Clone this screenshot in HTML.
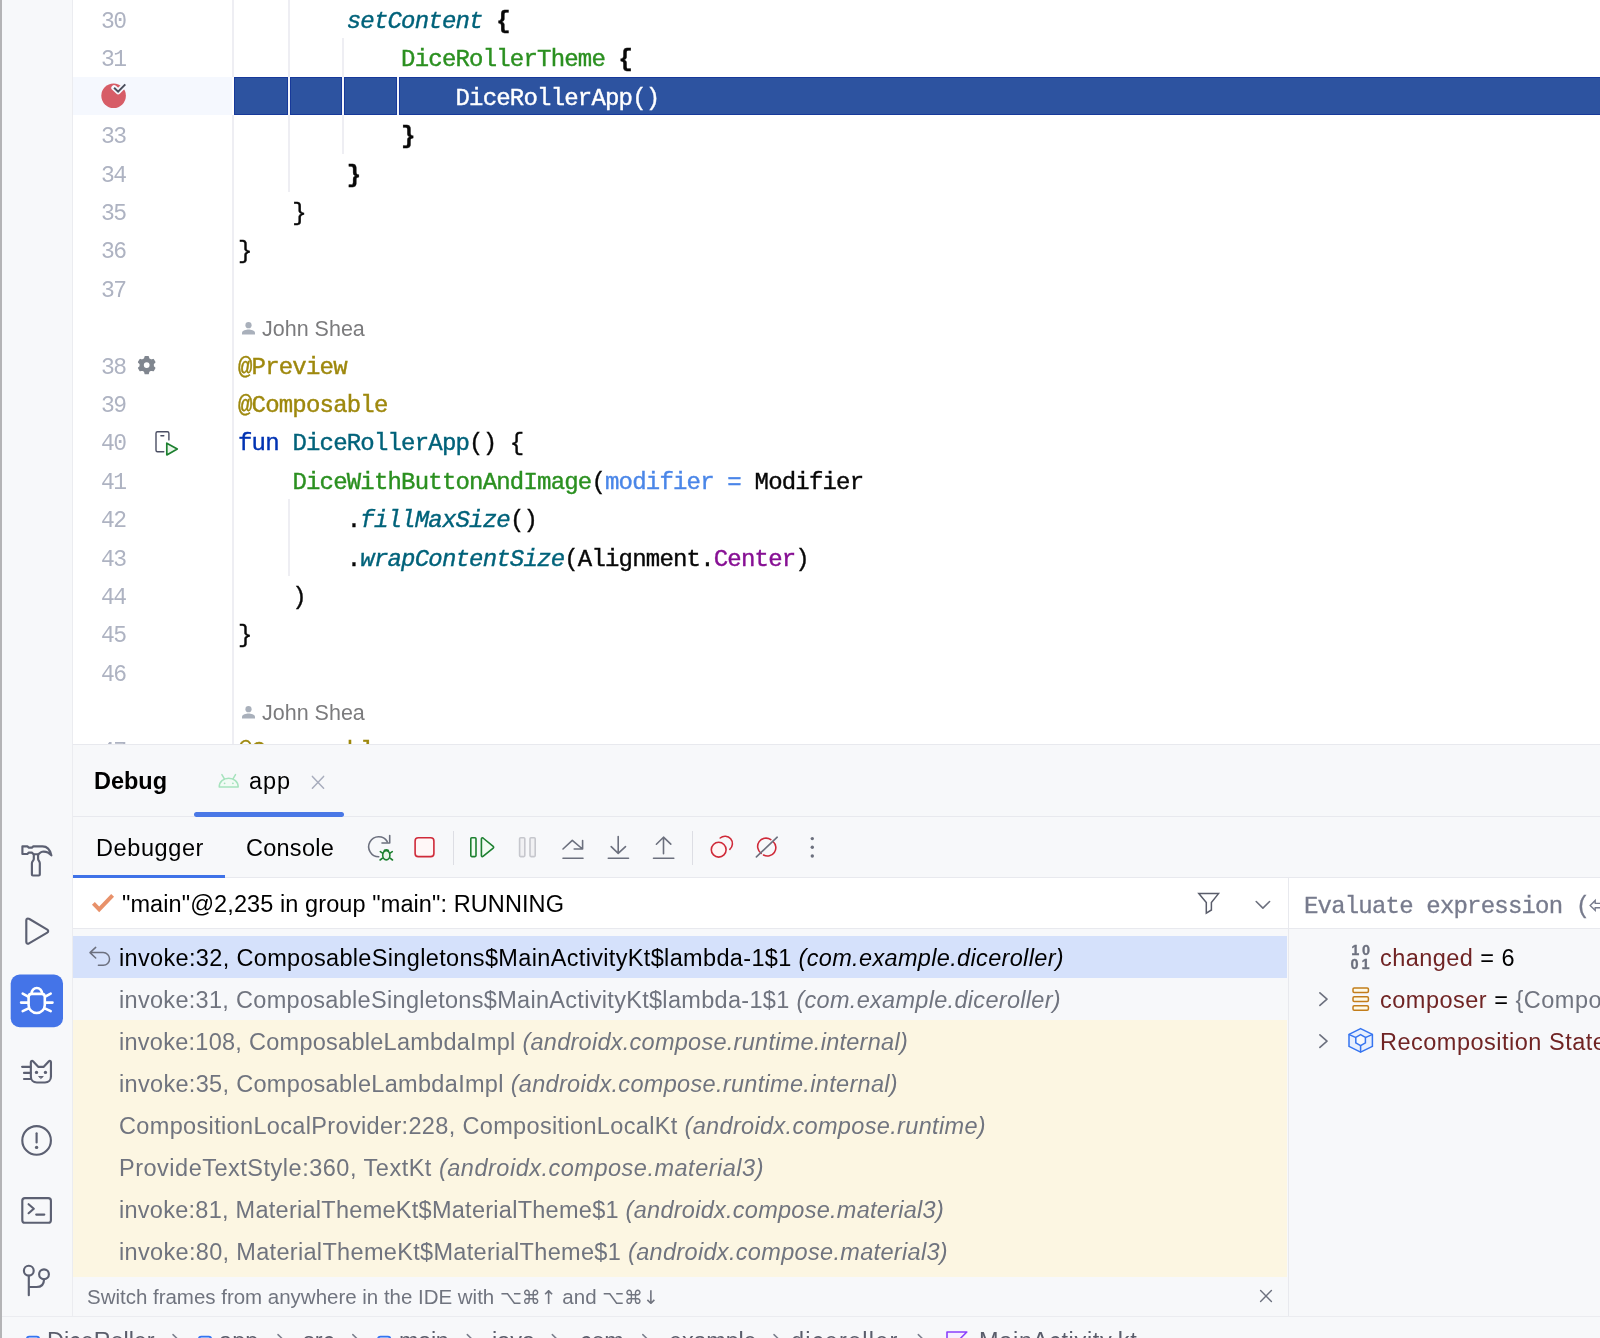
<!DOCTYPE html>
<html lang="en">
<head>
<meta charset="utf-8">
<title>Debug - MainActivity.kt</title>
<style>
*{box-sizing:border-box;margin:0;padding:0}
html,body{width:1600px;height:1338px;overflow:hidden;background:#f7f8fa}
body{position:relative;font-family:"Liberation Sans",sans-serif;color:#000}
.abs{position:absolute}
#edge{left:0;top:0;width:2px;height:1338px;background:#b4b4b6}
#strip{left:2px;top:0;width:71px;height:1316px;background:#f7f8fa;border-right:1px solid #ebecf0}
#editor{left:73px;top:0;width:1527px;height:744px;background:#fff;overflow:hidden}
#gutline{left:159px;top:0;width:2px;height:744px;background:#eeeef3}
.ln{position:absolute;left:0;width:52.5px;text-align:right;font-family:"Liberation Mono",monospace;font-size:23px;letter-spacing:-1.6px;line-height:38.4px;height:38.4px;color:#aeb3c2;white-space:pre}
.cl{position:absolute;left:165px;font-family:"Liberation Mono",monospace;font-size:24px;letter-spacing:-0.81px;-webkit-text-stroke:0.4px currentColor;line-height:38.4px;height:38.4px;white-space:pre;color:#080808}
.guide{position:absolute;width:2px;background:#eeeef3}
.fn{color:#00627a}.it{font-style:italic}
.cmp{color:#2b9020}
.ann{color:#9e880d}
.kw{color:#0033b3}
.np{color:#4a86e8}
.fld{color:#871094}
.b{font-weight:bold}
.auth{position:absolute;left:189px;font-size:21.5px;line-height:38.4px;color:#7b7b7d;white-space:pre}
#panel{left:73px;top:744px;width:1527px;height:572px;background:#f7f8fa}
.hline{position:absolute;height:1px;background:#e8e9ee}
.vline{position:absolute;width:1px;background:#e8e9ee}
.ui{position:absolute;white-space:pre;font-size:23.5px;line-height:42px;height:42px}
.sym{font-family:"DejaVu Sans",sans-serif;font-size:19px}
.fr{position:absolute;left:0;width:1214px;height:42px}
.fr span.t{position:absolute;left:46px;top:0;line-height:42px;font-size:24px;white-space:pre;color:#6c707e}
.lib{background:#fdf6e1}
.var{color:#702424}
svg{position:absolute;overflow:visible}
.ui,.cl,.ln,.auth,svg{will-change:transform}
#status{left:2px;top:1316px;width:1598px;height:22px;background:#f7f8fa;border-top:1px solid #ebecf0;overflow:hidden}
</style>
</head>
<body>
<div id="edge" class="abs"></div>
<div id="strip" class="abs"></div>

<!-- EDITOR -->
<div id="editor" class="abs">
<!--EDITOR-CONTENT-->
<div class="abs" style="left:0;top:77px;width:160px;height:38px;background:#f5f8fe"></div>
<div class="abs" style="left:161px;top:77px;width:1366px;height:38px;background:#2d53a0;border-top:1px solid #17399a;border-bottom:1px solid #17399a;border-left:1px solid #17399a"></div>
<div id="gutline" class="abs"></div>
<div class="abs" style="left:159px;top:77px;width:2px;height:38px;background:#fff"></div>
<div class="guide" style="left:215px;top:0.0px;height:192.0px;width:2px"></div>
<div class="guide" style="left:269.3px;top:38.4px;height:115.2px;width:2px"></div>
<div class="guide" style="left:323.6px;top:76.8px;height:38.4px;width:2px"></div>
<div class="guide" style="left:215px;top:499.2px;height:76.8px;width:2px"></div>
<div class="guide" style="left:215px;top:77px;height:38px;width:2px;background:#f4f5fa;box-shadow:-1px 0 #17399a,1px 0 #17399a"></div>
<div class="guide" style="left:269.3px;top:77px;height:38px;width:2px;background:#f4f5fa;box-shadow:-1px 0 #17399a,1px 0 #17399a"></div>
<div class="guide" style="left:323.6px;top:77px;height:38px;width:2px;background:#f4f5fa;box-shadow:-1px 0 #17399a,1px 0 #17399a"></div>
<div class="ln" style="top:2.9px">30</div>
<div class="cl" style="top:2.9px">        <span class="fn it">setContent</span> <span class="b">{</span></div>
<div class="ln" style="top:41.3px">31</div>
<div class="cl" style="top:41.3px">            <span class="cmp">DiceRollerTheme</span> <span class="b">{</span></div>
<div class="cl" style="top:79.7px">                <span style="color:#fff">DiceRollerApp()</span></div>
<div class="ln" style="top:118.1px">33</div>
<div class="cl" style="top:118.1px">            <span class="b">}</span></div>
<div class="ln" style="top:156.5px">34</div>
<div class="cl" style="top:156.5px">        <span class="b">}</span></div>
<div class="ln" style="top:194.9px">35</div>
<div class="cl" style="top:194.9px">    }</div>
<div class="ln" style="top:233.3px">36</div>
<div class="cl" style="top:233.3px">}</div>
<div class="ln" style="top:271.7px">37</div>
<svg style="left:168px;top:320.7px" width="15" height="15" viewBox="0 0 15 15"><circle cx="7.5" cy="4.2" r="3.1" fill="#a9b0bb"/><path d="M1 13.5v-1.6c0-2.2 4.3-3.3 6.5-3.3s6.5 1.1 6.5 3.3v1.6z" fill="#a9b0bb"/></svg>
<div class="auth" style="top:310.1px">John Shea</div>
<div class="ln" style="top:348.5px">38</div>
<div class="cl" style="top:348.5px"><span class="ann">@Preview</span></div>
<div class="ln" style="top:386.9px">39</div>
<div class="cl" style="top:386.9px"><span class="ann">@Composable</span></div>
<div class="ln" style="top:425.3px">40</div>
<div class="cl" style="top:425.3px"><span class="kw">fun</span> <span class="fn">DiceRollerApp</span>() {</div>
<div class="ln" style="top:463.7px">41</div>
<div class="cl" style="top:463.7px">    <span class="cmp">DiceWithButtonAndImage</span>(<span class="np">modifier =</span> Modifier</div>
<div class="ln" style="top:502.1px">42</div>
<div class="cl" style="top:502.1px">        .<span class="fn it">fillMaxSize</span>()</div>
<div class="ln" style="top:540.5px">43</div>
<div class="cl" style="top:540.5px">        .<span class="fn it">wrapContentSize</span>(Alignment.<span class="fld">Center</span>)</div>
<div class="ln" style="top:578.9px">44</div>
<div class="cl" style="top:578.9px">    )</div>
<div class="ln" style="top:617.3px">45</div>
<div class="cl" style="top:617.3px">}</div>
<div class="ln" style="top:655.7px">46</div>
<svg style="left:168px;top:704.7px" width="15" height="15" viewBox="0 0 15 15"><circle cx="7.5" cy="4.2" r="3.1" fill="#a9b0bb"/><path d="M1 13.5v-1.6c0-2.2 4.3-3.3 6.5-3.3s6.5 1.1 6.5 3.3v1.6z" fill="#a9b0bb"/></svg>
<div class="auth" style="top:694.1px">John Shea</div>
<div class="ln" style="top:732.5px">47</div>
<div class="cl" style="top:732.5px"><span class="ann">@Composable</span></div>
<!--/EDITOR-CONTENT-->
</div>

<!-- DEBUG PANEL -->
<div id="panel" class="abs">
<!--PANEL-CONTENT-->
<div class="hline" style="left:0px;top:0px;width:1527px"></div>
<div id="t_debug" class="ui" style="left:21px;top:16.3px;font-size:23.5px;letter-spacing:-0.022px;font-weight:bold;color:#000">Debug</div>
<div id="t_app" class="ui" style="left:176px;top:16.3px;font-size:23.5px;letter-spacing:0.927px;">app</div>
<div class="abs" style="left:121px;top:68px;width:150px;height:5px;background:#4a78e6;border-radius:3px"></div>
<div class="hline" style="left:0px;top:72px;width:121px"></div>
<div class="hline" style="left:271px;top:72px;width:1256px"></div>
<div id="t_debugger" class="ui" style="left:23px;top:83.3px;font-size:23.5px;letter-spacing:0.598px;">Debugger</div>
<div id="t_console" class="ui" style="left:173px;top:83.3px;font-size:23.5px;letter-spacing:0.254px;">Console</div>
<div class="hline" style="left:0px;top:133px;width:1527px"></div>
<div class="abs" style="left:0px;top:131px;width:152px;height:3px;background:#3f72e8"></div>
<div class="vline" style="left:380px;top:87px;height:34px;background:#dddee4"></div>
<div class="vline" style="left:619px;top:87px;height:34px;background:#dddee4"></div>
<div class="abs" style="left:0px;top:134px;width:1527px;height:50px;background:#fff"></div>
<div class="hline" style="left:0px;top:184px;width:1527px"></div>
<div class="vline" style="left:1215px;top:134px;height:438px;"></div>
<div id="t_thread" class="ui" style="left:49px;top:138.8px;font-size:23.5px;letter-spacing:0.092px;">&quot;main&quot;@2,235 in group &quot;main&quot;: RUNNING</div>
<div class="abs" style="left:0px;top:192px;width:1214px;height:42px;background:#d5e1fb"></div>
<div id="t_f0" class="ui" style="left:46px;top:192.8px;font-size:23.5px;letter-spacing:0.342px;color:#000">invoke:32, ComposableSingletons$MainActivityKt$lambda-1$1 <i>(com.example.diceroller)</i></div>
<div id="t_f1" class="ui" style="left:46px;top:234.8px;font-size:23.5px;letter-spacing:0.305px;color:#70747f">invoke:31, ComposableSingletons$MainActivityKt$lambda-1$1 <i>(com.example.diceroller)</i></div>
<div class="abs" style="left:0px;top:276px;width:1214px;height:42px;background:#fcf6e2"></div>
<div id="t_f2" class="ui" style="left:46px;top:276.8px;font-size:23.5px;letter-spacing:0.269px;color:#70747f">invoke:108, ComposableLambdaImpl <i>(androidx.compose.runtime.internal)</i></div>
<div class="abs" style="left:0px;top:318px;width:1214px;height:42px;background:#fcf6e2"></div>
<div id="t_f3" class="ui" style="left:46px;top:318.8px;font-size:23.5px;letter-spacing:0.319px;color:#70747f">invoke:35, ComposableLambdaImpl <i>(androidx.compose.runtime.internal)</i></div>
<div class="abs" style="left:0px;top:360px;width:1214px;height:42px;background:#fcf6e2"></div>
<div id="t_f4" class="ui" style="left:46px;top:360.8px;font-size:23.5px;letter-spacing:0.344px;color:#70747f">CompositionLocalProvider:228, CompositionLocalKt <i>(androidx.compose.runtime)</i></div>
<div class="abs" style="left:0px;top:402px;width:1214px;height:42px;background:#fcf6e2"></div>
<div id="t_f5" class="ui" style="left:46px;top:402.8px;font-size:23.5px;letter-spacing:0.507px;color:#70747f">ProvideTextStyle:360, TextKt <i>(androidx.compose.material3)</i></div>
<div class="abs" style="left:0px;top:444px;width:1214px;height:42px;background:#fcf6e2"></div>
<div id="t_f6" class="ui" style="left:46px;top:444.8px;font-size:23.5px;letter-spacing:0.269px;color:#70747f">invoke:81, MaterialThemeKt$MaterialTheme$1 <i>(androidx.compose.material3)</i></div>
<div class="abs" style="left:0px;top:486px;width:1214px;height:46.5px;background:#fcf6e2"></div>
<div id="t_f7" class="ui" style="left:46px;top:486.8px;font-size:23.5px;letter-spacing:0.325px;color:#70747f">invoke:80, MaterialThemeKt$MaterialTheme$1 <i>(androidx.compose.material3)</i></div>
<div id="t_hint" class="ui" style="left:14px;top:531.8px;font-size:20.5px;letter-spacing:-0.015px;color:#70747f">Switch frames from anywhere in the IDE with <span class="sym">⌥⌘↑</span> and <span class="sym">⌥⌘↓</span></div>
<div class="ui" style="left:1231px;top:138.8px;font-family:'Liberation Mono',monospace;font-size:24px;letter-spacing:-0.81px;color:#777b8d;-webkit-text-stroke:0.3px currentColor">Evaluate expression (<span style="font-family:'DejaVu Sans',sans-serif;font-size:27px;letter-spacing:0;-webkit-text-stroke:0;position:relative;top:1px;margin-left:-1px">⏎</span>)</div>
<div id="t_v0" class="ui" style="left:1307px;top:192.8px;font-size:23.5px;letter-spacing:0.452px;"><span class="var">changed</span> = 6</div>
<div id="t_v1" class="ui" style="left:1307px;top:234.8px;font-size:23.5px;letter-spacing:0px;letter-spacing:0.5px"><span class="var">composer</span> = <span style="color:#70747f">{ComposerImpl@21543}</span></div>
<div id="t_v2" class="ui" style="left:1307px;top:276.8px;font-size:23.5px;letter-spacing:0px;letter-spacing:0.5px"><span class="var">Recomposition State</span></div>
<!--/PANEL-CONTENT-->
</div>

<!-- LEFT STRIP ICONS -->
<!--STRIP-ICONS-->
<svg class="abs" style="left:0;top:0;pointer-events:none" width="1600" height="1338" viewBox="0 0 1600 1338" fill="none" stroke-linecap="round" stroke-linejoin="round">
<circle cx="113.6" cy="95.8" r="12.3" fill="#d75d67"/>
<path d="M114.1 87.8 L118.1 91.6 L125.3 84.4" stroke="#f5f8fe" stroke-width="5.5"/>
<path d="M114.1 87.8 L118.1 91.6 L125.3 84.4" stroke="#4a4e5c" stroke-width="2" stroke-linecap="butt" stroke-linejoin="miter"/>
<path d="M144.66 358.82 L145.18 356.64 L148.22 356.64 L148.74 358.82 L151.12 360.20 L153.27 359.55 L154.79 362.19 L153.16 363.73 L153.16 366.47 L154.79 368.01 L153.27 370.65 L151.12 370.00 L148.74 371.38 L148.22 373.56 L145.18 373.56 L144.66 371.38 L142.28 370.00 L140.13 370.65 L138.61 368.01 L140.24 366.47 L140.24 363.73 L138.61 362.19 L140.13 359.55 L142.28 360.20Z M150.30 365.10 A3.6 3.6 0 1 0 143.10 365.10 A3.6 3.6 0 1 0 150.30 365.10Z" fill="#80868f" fill-rule="evenodd" stroke="#80868f" stroke-width="1.4"/>
<path d="M168.9 439.9 V433.3 Q168.9 431.8 167.4 431.8 H157.5 Q156 431.8 156 433.3 V450.3 Q156 451.8 157.5 451.8 H163.8" stroke="#4a4e63" stroke-width="1.4"/>
<path d="M160.9 435.7 H163.8" stroke="#4a4e63" stroke-width="1.4"/>
<path d="M166.8 443.2 L177.3 448.9 L166.8 454.9 Z" stroke="#1d8030" stroke-width="1.7" fill="#eaf5ea"/>
<path d="M22.4 846.4 H27.4 L28.8 847.6 H31.9 L33.3 846.4 H42.5 C47 846.4 50.2 850.2 51.4 855.4 C49 852.6 45.6 851.2 42.2 851.7 C40.6 852 39.6 853.2 38.6 854.2 H33.6 L31.9 852.6 H28.8 L27.4 854 H22.4 Z" stroke="#5c6072" stroke-width="2.15"/>
<path d="M33.8 854.6 V859 C33.8 860.6 31.9 861.4 31.9 863.2 V874.5 Q31.9 875.5 32.9 875.5 H38.8 Q39.8 875.5 39.8 874.5 V863.2 C39.8 861.4 38.1 860.6 38.1 859 V854.6" stroke="#5c6072" stroke-width="2.15"/>
<path d="M26.3 920.3 C26.3 918.8 27.8 918 29 918.8 L47.3 929.6 C48.5 930.3 48.5 931.9 47.3 932.6 L29 943.4 C27.8 944.2 26.3 943.4 26.3 941.9 Z" stroke="#5c6072" stroke-width="2.15"/>
<rect x="10.7" y="974.6" width="52.3" height="52.6" rx="9" fill="#4474e8"/>
<path d="M28.6 997 Q28.6 993.9 31.7 993.9 H41.7 Q44.8 993.9 44.8 997 V1004.9 A8.1 8.1 0 0 1 28.6 1004.9 Z" stroke="#fff" stroke-width="2.6"/>
<path d="M31.5 993.6 A5.3 5.6 0 0 1 42.1 993.6" stroke="#fff" stroke-width="2.6"/>
<path d="M28.2 996.7 L22.7 993.7 M28.2 1002.6 H21.1 M28.6 1008.3 L22.7 1011.2 M45.2 996.7 L50.7 993.7 M45.2 1002.6 H52.5 M44.8 1008.3 L50.7 1011.2" stroke="#fff" stroke-width="2.6"/>
<path d="M30.85 1062.2 C30.85 1061 32.2 1060.5 33 1061.3 L38.2 1066.85 H43.75 L48.9 1061.3 C49.7 1060.5 50.95 1061 50.95 1062.2 V1076.5 C50.95 1080 48.5 1082.5 45 1082.5 H36.8 C33.3 1082.5 30.85 1080 30.85 1076.5 Z" stroke="#5c6072" stroke-width="2.15"/>
<path d="M22.1 1066.8 H30.6 M24 1072.9 H30.6 M24 1079 H30.6" stroke="#5c6072" stroke-width="2.15"/>
<circle cx="36.5" cy="1072.4" r="1.65" fill="#5c6072"/><circle cx="45.45" cy="1072.4" r="1.65" fill="#5c6072"/><path d="M39 1076.5 H43.3 L41.15 1078.3 Z" fill="#5c6072" stroke="#5c6072" stroke-width="0.9"/>
<circle cx="36.6" cy="1140.4" r="14.3" stroke="#5c6072" stroke-width="2.15"/>
<path d="M36.6 1133.2 V1142.4" stroke="#5c6072" stroke-width="2.15"/><circle cx="36.6" cy="1147.4" r="1.7" fill="#5f6371"/>
<rect x="22.3" y="1198.1" width="28.6" height="24.7" rx="2.6" stroke="#5c6072" stroke-width="2.15"/>
<path d="M28.6 1204.2 L33.8 1208.7 L28.6 1213.2 M36.2 1214.6 H44.3" stroke="#5c6072" stroke-width="2.15"/>
<circle cx="28.8" cy="1270.7" r="4.9" stroke="#5c6072" stroke-width="2.15"/><circle cx="44" cy="1274.3" r="4.9" stroke="#5c6072" stroke-width="2.15"/>
<path d="M28.8 1275.8 V1295.2 M44 1279.4 C44 1284.5 41 1287 36.5 1287 H29.2" stroke="#5c6072" stroke-width="2.15"/>
<path d="M219.2 787 C219.2 781.7 223.4 778.3 228.7 778.3 C234 778.3 238.2 781.7 238.2 787 Z" stroke="#a6e3bd" stroke-width="1.5" fill="#f2fbf5"/>
<path d="M221.9 774.6 L224.4 778.9 M235.5 774.6 L233 778.9" stroke="#a6e3bd" stroke-width="1.5"/>
<circle cx="224.6" cy="783.3" r="0.9" fill="#a6e3bd"/><circle cx="232.9" cy="783.3" r="0.9" fill="#a6e3bd"/>
<path d="M312.4 776.4 L323.6 788.2 M323.6 776.4 L312.4 788.2" stroke="#a8adbd" stroke-width="1.5"/>
<path d="M378.75 856.8 A10 10 0 1 1 387.2 841.5 M389.7 835.6 V843 H382" stroke="#6c707e" stroke-width="1.6"/>
<ellipse cx="386.3" cy="855.3" rx="3.6" ry="4.6" stroke="#1d8030" stroke-width="1.6" fill="#eaf5ea"/>
<path d="M384.2 851.4 C384.2 849.4 388.4 849.4 388.4 851.4 M382.6 853.2 L380.3 851.6 M382.5 858.2 L380.1 860 M390 853.2 L392.3 851.6 M390.1 858.2 L392.5 860" stroke="#1d8030" stroke-width="1.6"/>
<rect x="415.1" y="837.8" width="18.8" height="18.8" rx="3.2" stroke="#cf2a39" stroke-width="1.6" fill="#fff7f7"/>
<rect x="470.8" y="837.8" width="5.2" height="18.8" rx="1" stroke="#1d8030" stroke-width="1.6" fill="#f2fcf3"/>
<path d="M481.4 838.9 C481.4 838 482.3 837.5 483 838 L493.2 846.3 C493.8 846.8 493.8 847.6 493.2 848.1 L483 856.4 C482.3 856.9 481.4 856.4 481.4 855.5 Z" stroke="#1d8030" stroke-width="1.6" fill="#f2fcf3"/>
<rect x="519.6" y="837.8" width="5.2" height="18.8" rx="1" stroke="#c6c7cd" stroke-width="1.6" fill="#f1f1f3"/><rect x="530" y="837.8" width="5.2" height="18.8" rx="1" stroke="#c6c7cd" stroke-width="1.6" fill="#f1f1f3"/>
<path d="M563 849 L572.3 840.3 L582.5 849 M582.6 840.5 V849 H574.2 M563 858.3 H583" stroke="#6c707e" stroke-width="1.6"/>
<path d="M618.2 836.5 V853.2 M611.2 846.6 L618.2 853.4 L625.5 846.6 M608.3 858.3 H628.5" stroke="#6c707e" stroke-width="1.6"/>
<path d="M663.5 853.8 V837.3 M656.4 844.2 L663.5 837.2 L670.8 844.2 M653.5 858.3 H673.8" stroke="#6c707e" stroke-width="1.6"/>
<path d="M720.2 838 A7.4 7.4 0 1 1 729.8 849.3" stroke="#cf2a39" stroke-width="1.6"/>
<circle cx="718.7" cy="849.7" r="7.4" stroke="#cf2a39" stroke-width="1.6" fill="#fff5f5"/>
<path d="M761.2 853.3 A8.3 8.3 0 0 1 770.8 839.6 M773 841.5 A8.3 8.3 0 0 1 763.5 855" stroke="#cf2a39" stroke-width="1.6"/>
<path d="M756.4 856.9 L777.2 837.2" stroke="#6c707e" stroke-width="1.6"/>
<circle cx="812.3" cy="838.6" r="1.7" fill="#6c707e"/><circle cx="812.3" cy="847.3" r="1.7" fill="#6c707e"/><circle cx="812.3" cy="856" r="1.7" fill="#6c707e"/>
<path d="M93.4 903.4 L99.2 909.4 L112.6 895.4" stroke="#e8916a" stroke-width="4" stroke-linecap="butt" stroke-linejoin="miter"/>
<path d="M1198.8 893.6 H1218.5 L1211.4 902.6 V910 L1206.3 913.2 V902.6 Z" stroke="#5a5d6b" stroke-width="1.5" stroke-linejoin="miter"/>
<path d="M1256.2 901.5 L1262.9 908.1 L1269.6 901.5" stroke="#6c707e" stroke-width="1.6"/>
<path d="M95.7 947.4 L90 952.6 L95.7 958 M90.2 952.6 H103.2 A6.35 6.35 0 0 1 103.2 965.3 H98.4" stroke="#6c707e" stroke-width="1.5"/>
<path d="M1319.9 992.9 L1327 999.1 L1319.9 1005.4 M1319.9 1034.9 L1327 1041.1 L1319.9 1047.4" stroke="#6c707e" stroke-width="1.6"/>
<text x="1351.2" y="955.2" font-family="Liberation Sans, sans-serif" font-weight="bold" font-size="14.5" fill="#6c707e" stroke="#6c707e" stroke-width="0.3" textLength="19" lengthAdjust="spacing">10</text>
<text x="1350.6" y="969" font-family="Liberation Sans, sans-serif" font-weight="bold" font-size="14.5" fill="#6c707e" stroke="#6c707e" stroke-width="0.3" textLength="19" lengthAdjust="spacing">01</text>
<rect x="1353" y="987.9" width="15.4" height="4.6" rx="1.2" stroke="#c27d1a" stroke-width="1.5" fill="#fffbe8"/>
<rect x="1353" y="996.8" width="15.4" height="4.6" rx="1.2" stroke="#c27d1a" stroke-width="1.5" fill="#fffbe8"/>
<rect x="1353" y="1005.7" width="15.4" height="4.6" rx="1.2" stroke="#c27d1a" stroke-width="1.5" fill="#fffbe8"/>
<path d="M1360.6 1028.6 L1372.4 1034.4 V1046.4 L1360.6 1052.2 L1349 1046.4 V1034.4 Z" stroke="#3574f0" stroke-width="1.5" fill="#e7effd"/>
<path d="M1349.3 1034.6 L1356 1037.6 M1372.1 1034.6 L1365.2 1037.6 M1360.6 1051.8 V1045.6" stroke="#3574f0" stroke-width="1.5"/>
<path d="M1360.6 1034.6 L1365.4 1037.4 V1042.9 L1360.6 1045.6 L1355.8 1042.9 V1037.4 Z" stroke="#3574f0" stroke-width="1.5" fill="#f7f8fa"/>
<path d="M1260.6 1290.6 L1271.4 1301.4 M1271.4 1290.6 L1260.6 1301.4" stroke="#6c707e" stroke-width="1.4"/>
</svg>
<!--/STRIP-ICONS-->

<!-- STATUS / BREADCRUMB -->
<div id="status" class="abs">
<!--STATUS-CONTENT-->
<div id="s0" class="ui" style="left:45px;top:3px;color:#5a5d6b;letter-spacing:-0.089px">DiceRoller</div>
<div id="s1" class="ui" style="left:216.5px;top:3px;color:#5a5d6b;letter-spacing:0.094px">app</div>
<div id="s2" class="ui" style="left:301px;top:3px;color:#5a5d6b;letter-spacing:0.057px">src</div>
<div id="s3" class="ui" style="left:396.5px;top:3px;color:#5a5d6b;letter-spacing:-0.359px">main</div>
<div id="s4" class="ui" style="left:489.5px;top:3px;color:#5a5d6b;letter-spacing:-0.031px">java</div>
<div id="s5" class="ui" style="left:577.5px;top:3px;color:#5a5d6b;letter-spacing:-0.302px">com</div>
<div id="s6" class="ui" style="left:666.5px;top:3px;color:#5a5d6b;letter-spacing:-0.19px">example</div>
<div id="s7" class="ui" style="left:789px;top:3px;color:#5a5d6b;letter-spacing:1.214px">diceroller</div>
<div id="s8" class="ui" style="left:976.5px;top:3px;color:#5a5d6b;letter-spacing:0.671px">MainActivity.kt</div>
<svg class="abs" style="left:0;top:0" width="1598" height="22" viewBox="2 1316 1598 22" fill="none" stroke-linecap="round" stroke-linejoin="round">
<path d="M173 1333.6 L179.6 1340 L173 1346.4" stroke="#7a7e8c" stroke-width="1.5"/>
<path d="M278 1333.6 L284.6 1340 L278 1346.4" stroke="#7a7e8c" stroke-width="1.5"/>
<path d="M352.8 1333.6 L359.40000000000003 1340 L352.8 1346.4" stroke="#7a7e8c" stroke-width="1.5"/>
<path d="M467.3 1333.6 L473.90000000000003 1340 L467.3 1346.4" stroke="#7a7e8c" stroke-width="1.5"/>
<path d="M552.3 1333.6 L558.9 1340 L552.3 1346.4" stroke="#7a7e8c" stroke-width="1.5"/>
<path d="M642.8 1333.6 L649.4 1340 L642.8 1346.4" stroke="#7a7e8c" stroke-width="1.5"/>
<path d="M774 1333.6 L780.6 1340 L774 1346.4" stroke="#7a7e8c" stroke-width="1.5"/>
<path d="M918.3 1333.6 L924.9 1340 L918.3 1346.4" stroke="#7a7e8c" stroke-width="1.5"/>
<rect x="26.8" y="1335.6" width="12.4" height="12.4" rx="2.5" stroke="#3574f0" stroke-width="1.6" fill="#e7effd"/>
<rect x="198.8" y="1335.6" width="12.4" height="12.4" rx="2.5" stroke="#3574f0" stroke-width="1.6" fill="#e7effd"/>
<rect x="378" y="1335.6" width="12.4" height="12.4" rx="2.5" stroke="#3574f0" stroke-width="1.6" fill="#e7effd"/>
<path d="M947 1331 H966.8 L947 1351 Z" stroke="#8a3ffc" stroke-width="1.6" fill="#f6efff"/>
</svg>
<!--/STATUS-CONTENT-->
</div>
</body>
</html>
